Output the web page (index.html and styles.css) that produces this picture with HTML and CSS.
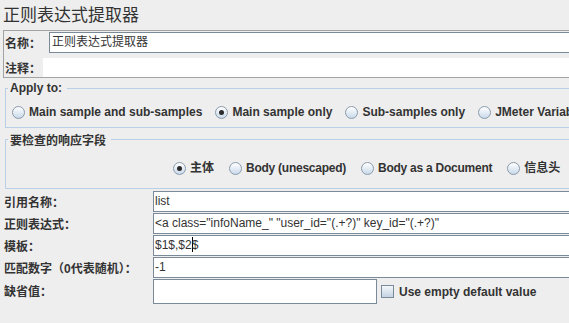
FILE: index.html
```html
<!DOCTYPE html>
<html>
<head>
<meta charset="utf-8">
<title>正则表达式提取器</title>
<link rel="stylesheet" href="styles.css">
</head>
<body>
<div class="page">
  <div class="title">正则表达式提取器</div>

  <div class="namebox">
    <div class="nrow">
      <span class="lbl name-lbl">名称：</span>
      <div class="field name-field">正则表达式提取器</div>
    </div>
    <div class="nrow crow">
      <span class="lbl comment-lbl">注释：</span>
      <div class="comment"></div>
    </div>
  </div>

  <fieldset class="group g1">
    <legend>Apply to:</legend>
    <div class="radios r1">
      <label class="radio"><span class="ri"></span>Main sample and sub-samples</label>
      <label class="radio"><span class="ri on"></span>Main sample only</label>
      <label class="radio"><span class="ri"></span>Sub-samples only</label>
      <label class="radio"><span class="ri"></span>JMeter Variable</label>
    </div>
  </fieldset>

  <fieldset class="group g2">
    <legend>要检查的响应字段</legend>
    <div class="radios r2">
      <label class="radio"><span class="ri on"></span>主体</label>
      <label class="radio tight"><span class="ri"></span>Body (unescaped)</label>
      <label class="radio tight"><span class="ri"></span>Body as a Document</label>
      <label class="radio"><span class="ri"></span>信息头</label>
    </div>
  </fieldset>

  <div class="form">
    <span class="lbl">引用名称：</span>
    <div class="field">list</div>
    <span class="lbl">正则表达式：</span>
    <div class="field">&lt;a class="infoName_" "user_id="(.+?)" key_id="(.+?)"</div>
    <span class="lbl">模板：</span>
    <div class="field">$1$,$2<span class="caret"></span>$</div>
    <span class="lbl">匹配数字（0代表随机）：</span>
    <div class="field">-1</div>
    <span class="lbl last-lbl">缺省值：</span>
    <div class="lastrow">
      <div class="field short"></div>
      <label class="check"><span class="cb"></span>Use empty default value</label>
    </div>
  </div>
</div>
</body>
</html>
```

FILE: styles.css
```css
* { box-sizing: border-box; }
html, body {
  margin: 0;
  padding: 0;
  background: #eeeeee;
}
body {
  font-family: "Liberation Sans", "Noto Sans CJK SC", sans-serif;
  font-size: 12px;
  color: #333333;
}
.page {
  width: 569px;
  height: 323px;
  overflow: hidden;
}
.title {
  height: 30px;
  line-height: 28px;
  padding-left: 3px;
  font-size: 17px;
  font-family: "Noto Sans CJK SC", sans-serif;
  color: #333333;
}
.lbl {
  font-weight: bold;
  white-space: nowrap;
  color: #333333;
}
.namebox {
  margin: 0 -40px 0 3px;
  border: 1px solid #a3a3a3;
  padding-top: 1px;
}
.nrow {
  display: flex;
  align-items: center;
}
.name-lbl {
  width: 45px;
  padding-left: 1px;
}
.comment-lbl {
  width: 39px;
  padding-left: 1px;
}
.crow {
  margin-top: 5px;
}
.comment {
  flex: 1;
  height: 19px;
  background: #ffffff;
}
.field {
  flex: 1;
  height: 21px;
  line-height: 19px;
  padding: 0 1px;
  background: #ffffff;
  border: 1px solid #7a8a99;
  color: #333333;
  white-space: nowrap;
  overflow: hidden;
}
.name-field {
  padding-left: 2px;
}
.caret {
  display: inline-block;
  width: 0;
  height: 15px;
  vertical-align: -3px;
  border-left: 1px solid #000000;
  margin-right: -1px;
}
.group {
  margin: 0 -40px 0 5px;
  border: 1px solid #b8cfe5;
  min-width: 0;
  padding: 0;
}
.group legend {
  font-weight: bold;
  line-height: 15px;
  padding: 0 5px 0 2px;
  margin-left: 2px;
}
.g1 {
  margin-top: 3px;
  padding: 8px 0 7px 0;
}
.g2 {
  margin-top: 4px;
  padding: 13px 0 12px 0;
}
.g2 legend {
  font-family: "Noto Sans CJK SC", sans-serif;
}
.radios {
  display: flex;
  gap: 14px;
  white-space: nowrap;
  font-weight: bold;
  line-height: 16px;
}
.r1 {
  padding-left: 6px;
  gap: 13px;
}
.r2 {
  padding-left: 167px;
  gap: 15px;
}
.radio {
  display: inline-flex;
  align-items: center;
  gap: 4px;
}
.tight {
  letter-spacing: -0.25px;
}
.ri {
  position: relative;
  width: 13px;
  height: 13px;
  border-radius: 50%;
  border: 1px solid #8a9aab;
  background: linear-gradient(#ffffff, #c9d9ea);
  flex: none;
}
.ri.on::after {
  content: "";
  position: absolute;
  left: 3px;
  top: 3px;
  width: 5px;
  height: 5px;
  border-radius: 50%;
  background: #2b2b2b;
}
.form {
  margin: 2px -20px 0 0;
  display: grid;
  grid-template-columns: 153px 1fr;
  row-gap: 1px;
  align-items: center;
}
.form > .lbl {
  padding-left: 4px;
}
.last-lbl {
  align-self: start;
  padding-top: 3px;
}
.lastrow {
  display: flex;
  align-items: center;
  gap: 4px;
}
.field.short {
  flex: none;
  width: 224px;
  height: 25px;
}
.check {
  display: inline-flex;
  align-items: center;
  gap: 5px;
  font-weight: bold;
  white-space: nowrap;
}
.cb {
  width: 13px;
  height: 13px;
  border: 1px solid #7a8a99;
  background: linear-gradient(#f4f7fb, #c3d2e3);
}
```
